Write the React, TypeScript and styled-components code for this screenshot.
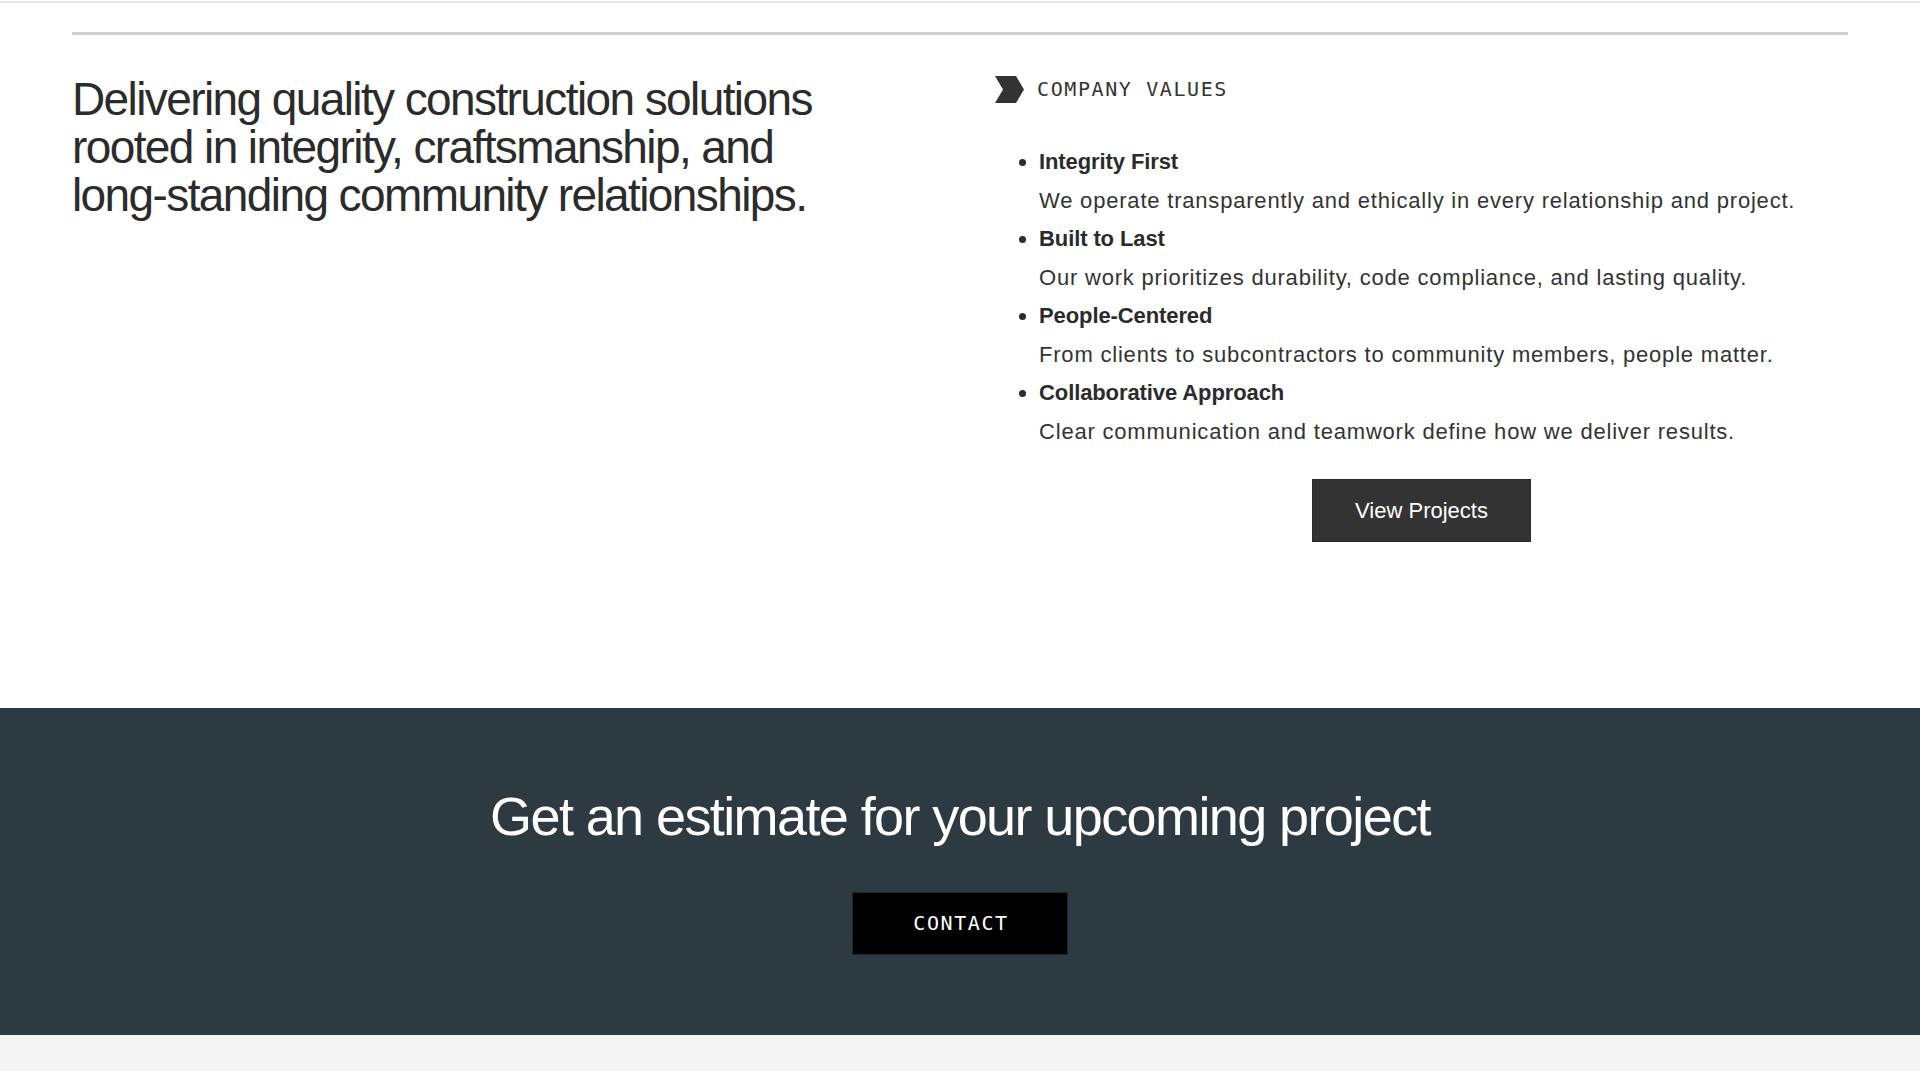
import React, {FC} from 'react';
import styled, {createGlobalStyle} from 'styled-components';

const sans = `"Liberation Sans", Arial, Helvetica, sans-serif`
const mono = `"DejaVu Sans Mono", "Liberation Mono", monospace`

interface IValue {
    title: string
    text: string
}

const values: IValue[] = [
    {title: 'Integrity First', text: 'We operate transparently and ethically in every relationship and project.'},
    {title: 'Built to Last', text: 'Our work prioritizes durability, code compliance, and lasting quality.'},
    {title: 'People-Centered', text: 'From clients to subcontractors to community members, people matter.'},
    {title: 'Collaborative Approach', text: 'Clear communication and teamwork define how we deliver results.'},
]

const App: FC = () => {
    return <Page>
        <GlobalStyle/>
        <TopRule/>

        <AboutSection>
            <Divider/>
            <AboutGrid>
                <Lead>
                    Delivering quality construction solutions rooted in integrity, craftsmanship, and
                    long-standing community relationships.
                </Lead>

                <ValuesColumn>
                    <Eyebrow>
                        <svg width="29" height="27" viewBox="0 0 29 27" aria-hidden="true">
                            <polygon points="0,0 21,0 29,13.5 21,27 0,27 8,13.5" fill="#333"/>
                        </svg>
                        <EyebrowLabel>COMPANY VALUES</EyebrowLabel>
                    </Eyebrow>

                    <ValuesList>
                        {values.map(v => <ValueItem key={v.title}>
                            <ValueTitle>{v.title}</ValueTitle>
                            <ValueText>{v.text}</ValueText>
                        </ValueItem>)}
                    </ValuesList>

                    <ProjectsButton type="button">View Projects</ProjectsButton>
                </ValuesColumn>
            </AboutGrid>
        </AboutSection>

        <CtaSection>
            <CtaHeading>Get an estimate for your upcoming project</CtaHeading>
            <ContactButton type="button">CONTACT</ContactButton>
        </CtaSection>

        <Footer/>
    </Page>
};
export default App;

const GlobalStyle = createGlobalStyle`
  * {
    box-sizing: border-box;
  }

  body {
    margin: 0;
    background: #fff;
    color: #333;
    font-family: ${sans};
  }
`

const Page = styled.div`
  padding-top: 1px;
`

const TopRule = styled.div`
  height: 2px;
  background: #e8e8e8;
`

const AboutSection = styled.section`
  padding: 0 72px 166px;
`

const Divider = styled.hr`
  margin: 29px 0 0;
  border: none;
  height: 3px;
  background: #d0d0d0;
`

const AboutGrid = styled.div`
  display: grid;
  grid-template-columns: 1fr 1fr;
  column-gap: 70px;
  margin-top: 40px;
`

const Lead = styled.h2`
  margin: 0;
  max-width: 790px;
  font-family: ${sans};
  font-weight: 400;
  font-size: 46px;
  line-height: 48px;
  letter-spacing: -1.6px;
  color: #2b2b2b;
`

const ValuesColumn = styled.div`
  display: flex;
  flex-direction: column;
`

const Eyebrow = styled.div`
  display: flex;
  align-items: center;
  gap: 13px;
  height: 28px;
`

const EyebrowLabel = styled.span`
  font-family: ${mono};
  font-size: 20px;
  line-height: 28px;
  letter-spacing: 1.6px;
  color: #333;
`

const ValuesList = styled.ul`
  margin: 40px 0 0;
  padding-left: 44px;
  font-size: 22px;
  line-height: 38.5px;
  color: #333;
`

const ValueItem = styled.li`
  &::marker {
    color: #2b2b2b;
  }
`

const ValueTitle = styled.strong`
  display: block;
  font-weight: 700;
  letter-spacing: -0.1px;
  color: #2b2b2b;
`

const ValueText = styled.span`
  display: block;
  letter-spacing: 0.8px;
`

const ProjectsButton = styled.button`
  align-self: center;
  margin-top: 28px;
  height: 63px;
  padding: 0 42px;
  display: inline-flex;
  align-items: center;
  justify-content: center;
  background: #333;
  border: 1px solid #2a2a2a;
  color: #fff;
  font-family: ${sans};
  font-size: 22px;
  cursor: pointer;
`

const CtaSection = styled.section`
  background: #2e3a42;
  padding: 76px 0 80px;
  display: flex;
  flex-direction: column;
  align-items: center;
`

const CtaHeading = styled.h2`
  margin: 0;
  font-family: ${sans};
  font-weight: 400;
  font-size: 54px;
  line-height: 64.8px;
  letter-spacing: -1.6px;
  color: #fff;
  text-align: center;
`

const ContactButton = styled.button`
  margin-top: 43px;
  height: 63px;
  padding: 0 58px 0 60px;
  display: inline-flex;
  align-items: center;
  justify-content: center;
  background: #000;
  border: 1px solid #1c252b;
  color: #fff;
  font-family: ${mono};
  font-size: 20px;
  letter-spacing: 1.6px;
  cursor: pointer;
`

const Footer = styled.footer`
  height: 240px;
  background: #f4f4f4;
`
